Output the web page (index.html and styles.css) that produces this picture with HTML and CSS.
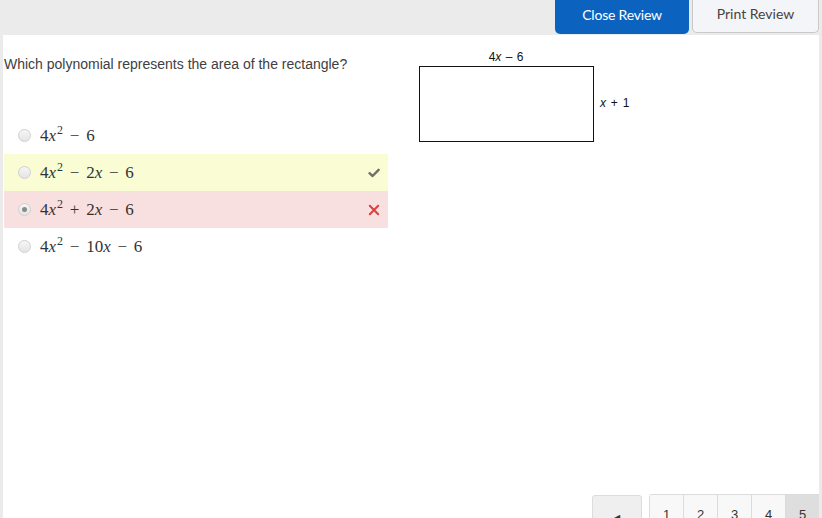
FILE: index.html
```html
<!DOCTYPE html>
<html>
<head>
<meta charset="utf-8">
<link rel="stylesheet" href="styles.css">
</head>
<body>
<div class="topbar">
  <div class="btn btn-close">Close Review</div>
  <div class="btn btn-print">Print Review</div>
</div>
<div class="panel">
  <div class="main">
    <div class="left">
      <p class="question">Which polynomial represents the area of the rectangle?</p>
      <ul class="options">
        <li class="opt"><span class="radio"></span><span class="math">4<i>x</i><sup>2</sup> − 6</span></li>
        <li class="opt correct"><span class="radio"></span><span class="math">4<i>x</i><sup>2</sup> − 2<i>x</i> − 6</span>
          <svg class="mark" width="12" height="10" viewBox="0 0 12 10"><path d="M1.5 5.2 L4.6 8 L10.6 1.8" fill="none" stroke="#6f6f6f" stroke-width="2.4" stroke-linecap="round" stroke-linejoin="round"/></svg></li>
        <li class="opt wrong"><span class="radio checked"></span><span class="math">4<i>x</i><sup>2</sup> + 2<i>x</i> − 6</span>
          <svg class="mark" width="12" height="12" viewBox="0 0 12 12"><path d="M1.8 1.8 L10.2 10.2 M10.2 1.8 L1.8 10.2" fill="none" stroke="#d9403c" stroke-width="2" stroke-linecap="round"/></svg></li>
        <li class="opt"><span class="radio"></span><span class="math">4<i>x</i><sup>2</sup> − 10<i>x</i> − 6</span></li>
      </ul>
    </div>
    <div class="figure">
      <div class="top-label">4<i>x</i> – 6</div>
      <div class="fig-row">
        <div class="rect"></div>
        <div class="side-label"><i>x</i> + 1</div>
      </div>
    </div>
  </div>
  <div class="pager">
    <div class="prev">◀</div>
    <div class="pages">
      <div class="page">1</div>
      <div class="page">2</div>
      <div class="page">3</div>
      <div class="page">4</div>
      <div class="page current">5</div>
    </div>
  </div>
</div>
</body>
</html>
```
FILE: styles.css
```css
html, body {
  margin: 0;
  padding: 0;
}
body {
  background: #ebebeb;
  width: 822px;
  height: 518px;
  overflow: hidden;
  font-family: "Liberation Sans", Arial, sans-serif;
}
.topbar {
  height: 35px;
  display: flex;
  justify-content: flex-end;
  align-items: flex-start;
  gap: 3px;
  padding-right: 3px;
}
.btn {
  box-sizing: border-box;
  display: flex;
  align-items: center;
  justify-content: center;
  font-family: Lato, "Open Sans", sans-serif;
  font-size: 14px;
  border-radius: 0 0 5px 5px;
  padding-bottom: 5px;
}
.btn-close {
  width: 134px;
  height: 34px;
  background: #0c63bf;
  color: #fff;
  letter-spacing: -0.2px;
}
.btn-print {
  width: 127px;
  height: 33px;
  background: #f4f5f8;
  border: 1px solid #c9c9c9;
  border-top: none;
  color: #444;
}
.panel {
  margin: 0 3px;
  background: #fff;
  height: 483px;
  overflow: hidden;
}
.main {
  height: 459px;
  display: flex;
  gap: 31px;
}
.left {
  width: 384px;
  margin-left: 1px;
}
.question {
  margin: 21px 0 0 0;
  font-size: 14px;
  line-height: 16px;
  color: #404040;
}
.options {
  list-style: none;
  margin: 45px 0 0 0;
  padding: 0;
}
.opt {
  height: 37px;
  display: flex;
  align-items: center;
  position: relative;
}
.opt.correct {
  background: #fafcd3;
}
.opt.wrong {
  background: #f9e0e0;
}
.radio {
  box-sizing: border-box;
  width: 13px;
  height: 13px;
  border-radius: 50%;
  border: 1px solid #d0d0d0;
  background: linear-gradient(#f6f6f6, #e4e4e4);
  margin-left: 14px;
  margin-right: 9px;
  display: flex;
  align-items: center;
  justify-content: center;
}
.radio.checked::after {
  content: "";
  width: 5px;
  height: 5px;
  border-radius: 50%;
  background: #8a8a8a;
}
.math {
  font-family: "Liberation Serif", "DejaVu Serif", serif;
  font-size: 17px;
  color: #333;
  word-spacing: 2.5px;
  flex: 1;
}
.math sup {
  font-size: 12px;
  line-height: 0;
  vertical-align: 7px;
  margin-left: 1px;
}
.mark {
  margin-right: 8px;
}
.figure {
  padding-top: 15px;
  font-size: 12px;
  color: #111;
}
.top-label {
  width: 174px;
  text-align: center;
  line-height: 14px;
  margin-bottom: 2px;
  word-spacing: 1px;
}
.fig-row {
  display: flex;
  align-items: center;
  gap: 6px;
}
.rect {
  box-sizing: border-box;
  width: 175px;
  height: 76px;
  border: 1.5px solid #111;
}
.side-label {
  margin-top: -2px;
  word-spacing: 1.5px;
}
.pager {
  display: flex;
  justify-content: flex-end;
  align-items: flex-start;
  gap: 7px;
}
.prev {
  box-sizing: border-box;
  width: 50px;
  height: 36px;
  margin-top: 1px;
  background: #efefef;
  border: 1px solid #dcdcdc;
  border-radius: 3px 3px 0 0;
  font-size: 8px;
  color: #333;
  text-align: center;
  padding-top: 17px;
}
.pages {
  display: flex;
  border-top: 1px solid #dcdcdc;
  border-radius: 3px 0 0 0;
  overflow: hidden;
}
.page {
  box-sizing: border-box;
  width: 34px;
  height: 36px;
  background: #f8f8f8;
  border-left: 1px solid #dcdcdc;
  font-size: 13px;
  color: #333;
  text-align: center;
  padding-top: 12px;
}
.page.current {
  background: #dedede;
}
```
